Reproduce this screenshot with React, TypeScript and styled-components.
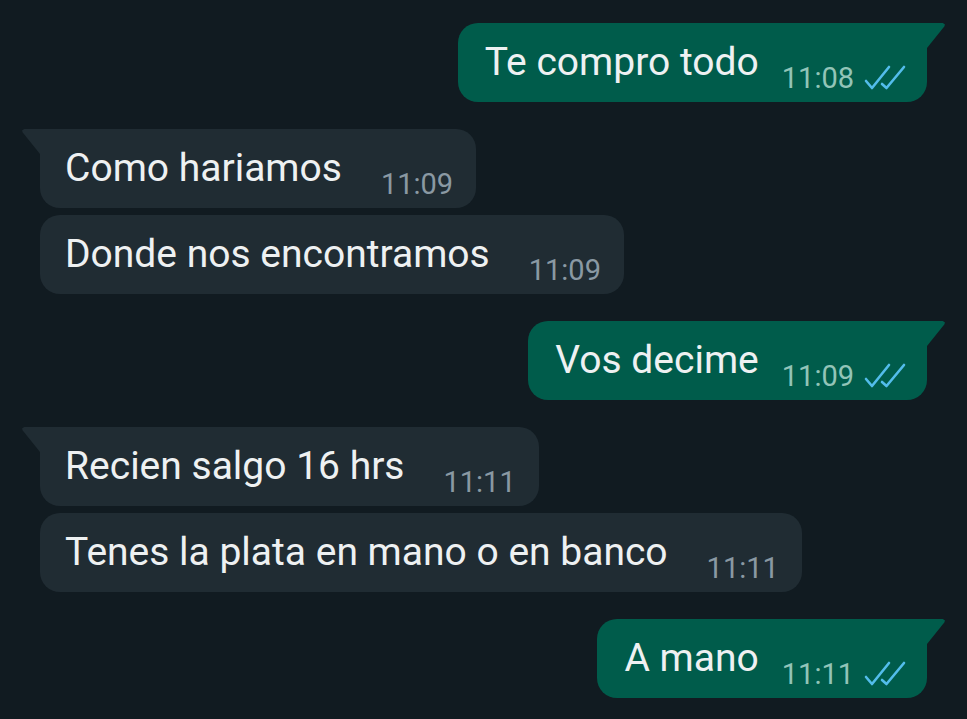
import React from "react";
import styled, { createGlobalStyle } from "styled-components";

const Global = createGlobalStyle`
  html, body { margin: 0; padding: 0; background: #111b21; }
  body { font-family: Roboto, "Noto Sans", "Liberation Sans", sans-serif; }
  #root { min-height: 719px; }
`;

const Chat = styled.div`
  display: flex;
  flex-direction: column;
  gap: 27px;
  padding: 23px 40px 0 40px;
  height: 719px;
  box-sizing: border-box;
  background: #111b21;
  overflow: hidden;
`;

const Group = styled.div<{ $out: boolean }>`
  display: flex;
  flex-direction: column;
  gap: 7px;
  align-items: ${(p) => (p.$out ? "flex-end" : "flex-start")};
`;

const Bubble = styled.div<{ $out: boolean; $tail: boolean }>`
  position: relative;
  display: flex;
  align-items: flex-end;
  height: 79px;
  box-sizing: border-box;
  padding: 17px ${(p) => (p.$out ? "20px" : "23px")} 18px ${(p) => (p.$out ? "27px" : "25px")};
  gap: ${(p) => (p.$out ? "23px" : "39px")};
  background: ${(p) => (p.$out ? "#005c4b" : "#202c33")};
  border-radius: 20px;
  ${(p) =>
    p.$tail
      ? p.$out
        ? "border-top-right-radius: 0;"
        : "border-top-left-radius: 0;"
      : ""}

  &::before {
    content: "";
    display: ${(p) => (p.$tail ? "block" : "none")};
    position: absolute;
    top: 0;
    width: 18px;
    height: 25px;
    background: inherit;
    ${(p) =>
      p.$out
        ? "right: -18px; clip-path: polygon(0 0, 88% 0, 100% 6%, 96% 14%, 0 100%); "
        : "left: -18px; clip-path: polygon(12% 0, 100% 0, 100% 100%, 4% 14%, 0 6%);"}
  }
`;

const Text = styled.span`
  color: #eef1f2;
  font-size: 39px;
  line-height: 44px;
  white-space: nowrap;
`;

const Meta = styled.span<{ $out: boolean }>`
  display: flex;
  align-items: center;
  gap: 9px;
  margin-bottom: -8px;
  font-size: 29px;
  line-height: 28px;
  white-space: nowrap;
  color: ${(p) => (p.$out ? "#92c4b8" : "#8a99a3")};
`;

const Checks = styled.svg`
  display: block;
  width: 44px;
  height: 25px;
  margin-top: -2px;
`;

const DoubleCheck = () => (
  <Checks viewBox="0 0 44 25" fill="none">
    <polyline
      points="3,16 9,23 26,2"
      stroke="#53bdeb"
      strokeWidth="2.6"
      strokeLinecap="round"
      strokeLinejoin="round"
    />
    <polyline
      points="19,19 23.5,23 41,2"
      stroke="#53bdeb"
      strokeWidth="2.6"
      strokeLinecap="round"
      strokeLinejoin="round"
    />
  </Checks>
);

type Msg = { text: string; time: string };
type G = { out: boolean; msgs: Msg[] };

const groups: G[] = [
  { out: true, msgs: [{ text: "Te compro todo", time: "11:08" }] },
  {
    out: false,
    msgs: [
      { text: "Como hariamos", time: "11:09" },
      { text: "Donde nos encontramos", time: "11:09" },
    ],
  },
  { out: true, msgs: [{ text: "Vos decime", time: "11:09" }] },
  {
    out: false,
    msgs: [
      { text: "Recien salgo 16 hrs", time: "11:11" },
      { text: "Tenes la plata en mano o en banco", time: "11:11" },
    ],
  },
  { out: true, msgs: [{ text: "A mano", time: "11:11" }] },
];

export default function App() {
  return (
    <>
      <Global />
      <Chat>
        {groups.map((g, gi) => (
          <Group key={gi} $out={g.out}>
            {g.msgs.map((m, mi) => (
              <Bubble key={mi} $out={g.out} $tail={mi === 0}>
                <Text>{m.text}</Text>
                <Meta $out={g.out}>
                  {m.time}
                  {g.out && <DoubleCheck />}
                </Meta>
              </Bubble>
            ))}
          </Group>
        ))}
      </Chat>
    </>
  );
}
